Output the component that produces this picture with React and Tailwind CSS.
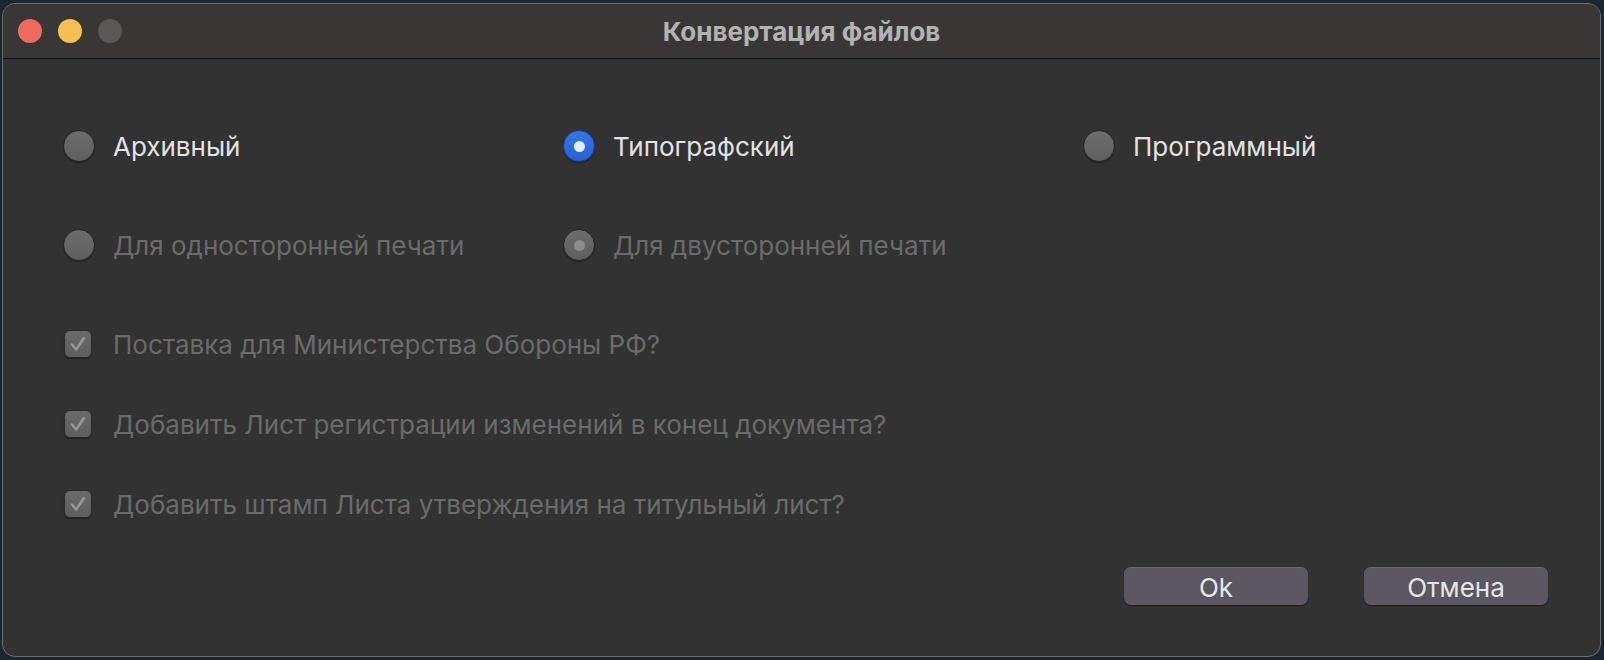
import React from "react";

const Radio = ({ checked, disabled }) => {
  if (checked && !disabled) {
    return (
      <div className="w-[32px] h-[32px] rounded-full bg-gradient-to-b from-[#3475e6] to-[#2a62d0] border border-[#1e3f86] flex items-center justify-center shadow-[0_1px_1px_rgba(0,0,0,0.4)]">
        <div className="w-[11px] h-[11px] rounded-full bg-[#e6edfb]" />
      </div>
    );
  }
  return (
    <div className="w-[32px] h-[32px] rounded-full bg-gradient-to-b from-[#6c6c6c] to-[#5f5f5f] border border-[#272727] flex items-center justify-center shadow-[0_1px_1px_rgba(0,0,0,0.4)]">
      {checked && <div className="w-[11px] h-[11px] rounded-full bg-[#8c8c8c]" />}
    </div>
  );
};

const Check = () => (
  <div className="w-[28px] h-[28px] rounded-[6px] bg-gradient-to-b from-[#6a6a6a] to-[#5e5e5e] border border-[#2a2a2a] flex items-center justify-center shadow-[0_1px_1px_rgba(0,0,0,0.4)]">
    <svg width="20" height="20" viewBox="0 0 20 20" fill="none">
      <path d="M4 10.5 L8.2 15.5 L16 4" stroke="#999999" strokeWidth="2.4" strokeLinecap="round" strokeLinejoin="round" />
    </svg>
  </div>
);

const RadioItem = ({ label, checked, disabled }) => (
  <div className="flex items-center gap-[18px]">
    <Radio checked={checked} disabled={disabled} />
    <span className={disabled ? "text-[#6b6b6b]" : "text-[#e3e3e3]"}>{label}</span>
  </div>
);

const CheckItem = ({ label }) => (
  <div className="flex items-center h-[40px] pl-[1px] gap-[21px]">
    <Check />
    <span className="text-[#6b6b6b]">{label}</span>
  </div>
);

export default function App() {
  return (
    <div
      className="w-[1604px] h-[660px] bg-[#1c2630] pt-[3px] pl-[2px] overflow-hidden"
      style={{ fontFamily: "Inter, 'Noto Sans', sans-serif" }}
    >
      <div className="w-[1599px] h-[654px] rounded-[13px] border border-[#6e6e6e] overflow-hidden flex flex-col bg-[#323232]">
        <div className="relative h-[55px] bg-[#393735] border-b border-[#111] flex items-center justify-center shrink-0">
          <div className="absolute left-[15px] top-[15px] flex gap-[16px]">
            <div className="w-[24px] h-[24px] rounded-full bg-[#ee6a5f]" />
            <div className="w-[24px] h-[24px] rounded-full bg-[#f5c04f]" />
            <div className="w-[24px] h-[24px] rounded-full bg-[#5a5857]" />
          </div>
          <span className="text-[26px] font-bold text-[#b3b3b3]">Конвертация файлов</span>
        </div>
        <div className="flex-1 flex flex-col pl-[60px] text-[26px]">
          <div className="grid grid-cols-[500px_520px_500px] h-[40px] items-center mt-[67px]">
            <RadioItem label="Архивный" />
            <RadioItem label="Типографский" checked />
            <RadioItem label="Программный" />
          </div>
          <div className="grid grid-cols-[500px_520px_500px] h-[40px] items-center mt-[59px]">
            <RadioItem label="Для односторонней печати" disabled />
            <RadioItem label="Для двусторонней печати" checked disabled />
          </div>
          <div className="mt-[59px] flex flex-col gap-[40px]">
            <CheckItem label="Поставка для Министерства Обороны РФ?" />
            <CheckItem label="Добавить Лист регистрации изменений в конец документа?" />
            <CheckItem label="Добавить штамп Листа утверждения на титульный лист?" />
          </div>
          <div className="flex justify-end gap-[56px] pr-[52px] mt-[43px]">
            <button className="w-[184px] h-[38px] rounded-[7px] bg-[#5a5760] text-[#e6e6e6] text-[26px] shadow-[0_1px_1px_rgba(0,0,0,0.5)] border-t border-[#6a6770]">
              Ok
            </button>
            <button className="w-[184px] h-[38px] rounded-[7px] bg-[#5a5760] text-[#e6e6e6] text-[26px] shadow-[0_1px_1px_rgba(0,0,0,0.5)] border-t border-[#6a6770]">
              Отмена
            </button>
          </div>
        </div>
      </div>
    </div>
  );
}
